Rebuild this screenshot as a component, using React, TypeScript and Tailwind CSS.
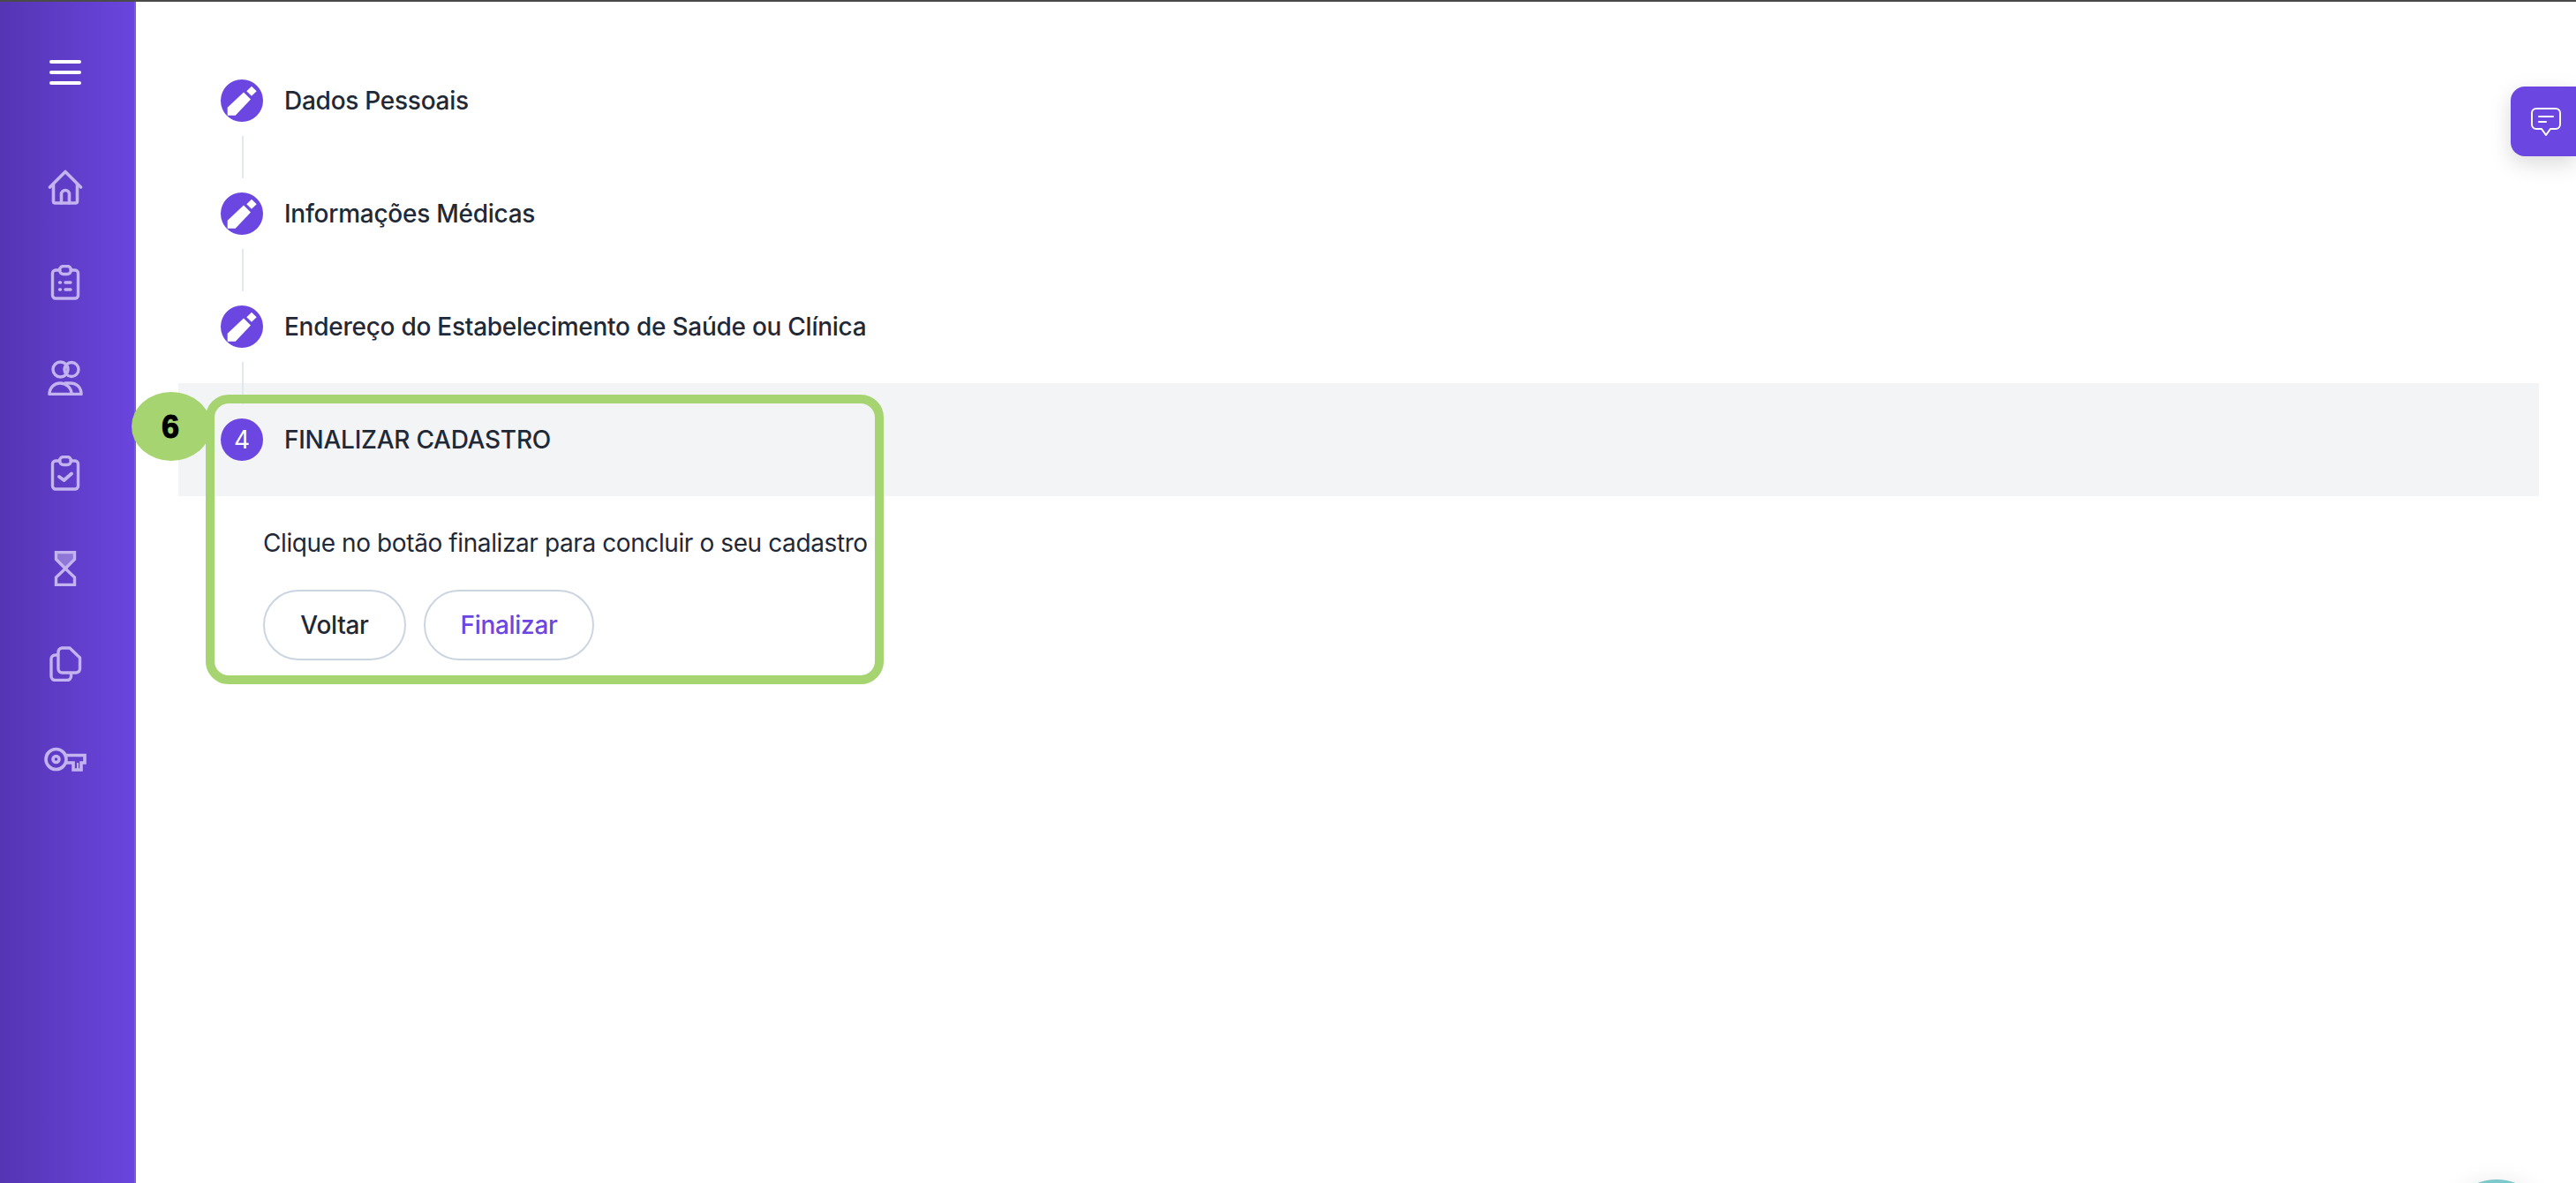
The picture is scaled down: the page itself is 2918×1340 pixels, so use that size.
const iconClass = "fill-none stroke-[#c3b3ef]";

function MenuIcon() {
  return (
    <svg width="40" height="40" viewBox="0 0 40 40" className="fill-none stroke-white">
      <path d="M4 8H36M4 20H36M4 32H36" strokeWidth="4" strokeLinecap="round" />
    </svg>
  );
}

function HomeIcon() {
  return (
    <svg width="40" height="40" viewBox="0 0 40 40" className={iconClass} strokeWidth="3.600" strokeLinejoin="round" strokeLinecap="round">
      <path d="M2.500 20L20 2.500L37.500 20" />
      <path d="M6.500 17V36a2 2 0 0 0 2 2H31.500a2 2 0 0 0 2-2V17" />
      <path d="M15.500 38V28a4.500 4.500 0 0 1 9 0V38" />
    </svg>
  );
}

function ClipboardBase() {
  return (
    <>
      <path d="M14 6H9a3.500 3.500 0 0 0-3.500 3.500V34.500A3.500 3.500 0 0 0 9 38H31a3.500 3.500 0 0 0 3.500-3.500V9.500A3.500 3.500 0 0 0 31 6H26" />
      <rect x="13.500" y="1.500" width="13" height="9" rx="4.500" />
    </>
  );
}

function ListIcon() {
  return (
    <svg width="40" height="40" viewBox="0 0 40 40" className={iconClass} strokeWidth="3.400" strokeLinecap="round">
      <ClipboardBase />
      <path d="M13.500 20h1M13.500 28h1M20 20h6M20 28h6" />
    </svg>
  );
}

function PeopleIcon() {
  return (
    <svg width="40" height="40" viewBox="0 0 40 40" className={iconClass} strokeWidth="3.400" strokeLinejoin="round">
      <circle cx="14.500" cy="10.500" r="8.500" />
      <circle cx="27" cy="10.500" r="8" />
      <path d="M2 38.500C2 31 7.500 26 14 26C21 26 27 31 27 38.500Z" />
      <path d="M19 26H26C33 26 38 31 38 38.500H27" />
    </svg>
  );
}

function CheckIcon() {
  return (
    <svg width="40" height="40" viewBox="0 0 40 40" className={iconClass} strokeWidth="3.400" strokeLinecap="round" strokeLinejoin="round">
      <ClipboardBase />
      <path d="M13 24L18.500 28L27 20.500" strokeWidth="4" />
    </svg>
  );
}

function HourglassIcon() {
  return (
    <svg width="40" height="40" viewBox="0 0 40 40" className={iconClass} strokeWidth="3.400">
      <path d="M9.500 1.500H30.500V9.500L20 20L9.500 9.500Z" className="fill-white/30" />
      <path d="M20 20L30.500 30V38.500H9.500V30Z" />
    </svg>
  );
}

function CopyIcon() {
  return (
    <svg width="40" height="40" viewBox="0 0 40 40" className={iconClass} strokeWidth="3.400" strokeLinejoin="round">
      <path d="M16 2H25L36.500 13V25.500a4.500 4.500 0 0 1-4.500 4.500H16.500a4.500 4.500 0 0 1-4.500-4.500V6.500A4.500 4.500 0 0 1 16 2Z" />
      <path d="M12 10H8.500A4.500 4.500 0 0 0 4 14.500V34a4.500 4.500 0 0 0 4.500 4.500H22a4.500 4.500 0 0 0 4.500-4.500V30" />
    </svg>
  );
}

function KeyIcon() {
  return (
    <svg width="48" height="28" viewBox="0 0 48 28" className={`shrink-0 ${iconClass}`} strokeWidth="3.600">
      <circle cx="13.500" cy="14" r="11.500" />
      <circle cx="13.500" cy="14" r="3.500" />
      <path d="M25 9.500H46V18H42V26H33V18H25" />
      <path d="M38 18V26" strokeWidth="2" />
    </svg>
  );
}

function PencilBadge() {
  return (
    <div className="h-12 w-12 shrink-0 rounded-full bg-[#6b46e0]">
      <svg width="48" height="48" viewBox="0 0 48 48" className="fill-white">
        <path d="M7.700 31.700V40.700H16.700L34 22.500L26 14.500Z" />
        <path d="M29.300 13.300L35 7.700L40.700 13.300L35 18.700Z" />
      </svg>
    </div>
  );
}

const navIcons = [HomeIcon, ListIcon, PeopleIcon, CheckIcon, HourglassIcon, CopyIcon, KeyIcon];
const doneSteps = ["Dados Pessoais", "Informações Médicas", "Endereço do Estabelecimento de Saúde ou Clínica"];

export default function App() {
  return (
    <div className="relative flex h-screen w-full overflow-hidden border-t-2 border-[#4a4a4a] bg-white font-['Inter',sans-serif] text-[#1f2937]">
      <aside className="flex w-[154px] shrink-0 flex-col items-center gap-[68px] border-r-2 border-[#7a5be3] bg-linear-to-r from-[#5535b3] to-[#6a45de] pr-1 pt-[60px]">
        <div className="mb-[22px]">
          <MenuIcon />
        </div>
        {navIcons.map((Icon, i) => (
          <div key={i} className="flex h-10 w-10 items-center justify-center">
            <Icon />
          </div>
        ))}
      </aside>

      <main className="relative flex-1 pl-12 pr-[42px] pt-[88px]">
        {doneSteps.map((label) => (
          <div key={label}>
            <div className="flex items-center gap-6 pl-12">
              <PencilBadge />
              <p className="text-[28px] font-medium leading-10 tracking-[-0.26px]">{label}</p>
            </div>
            <div className="relative z-10 my-4 ml-[72px] h-12 w-0.5 bg-[#e2e8f0]" />
          </div>
        ))}

        <div className="-mt-10 flex h-32 items-center gap-6 bg-[#f3f4f6] pl-12">
          <div className="flex h-12 w-12 shrink-0 items-center justify-center rounded-full bg-[#6b46e0] text-[28px] text-white">4</div>
          <p className="text-[28px] font-medium leading-10 tracking-[-0.26px]">FINALIZAR CADASTRO</p>
        </div>

        <div className="pl-24 pt-[33px]">
          <p className="text-[28px] leading-10 tracking-[-0.4px]">Clique no botão finalizar para concluir o seu cadastro</p>
          <div className="mt-[33px] flex gap-5">
            <button type="button" className="h-20 w-[162px] rounded-[40px] border-2 border-[#cbd5e1] text-[28px] font-medium tracking-[-0.3px]">Voltar</button>
            <button type="button" className="h-20 w-[193px] rounded-[40px] border-2 border-[#cbd5e1] text-[28px] font-medium tracking-[-0.3px] text-[#6b46e0]">Finalizar</button>
          </div>
        </div>

        <div className="absolute left-[79px] top-[445px] z-20 h-[328px] w-[768px] rounded-[26px] border-[10px] border-[#a6d470]" />
        <div className="absolute left-[-5px] top-[442px] z-30 flex h-[78px] w-[90px] items-center justify-center rounded-[50%] bg-[#a6d470] pr-0.5 pt-0.5 font-['Liberation_Sans',sans-serif] text-[36px] font-bold text-black [-webkit-text-stroke:1px_black]">6</div>
      </main>

      <button type="button" className="absolute right-0 top-[96px] flex h-[79px] w-[74px] items-center justify-center rounded-l-2xl bg-[#6b46e0] pl-1.5 shadow-[0_8px_24px_rgba(0,0,0,0.15)]">
        <svg width="36" height="34" viewBox="0 0 36 34" className="fill-none stroke-white" strokeWidth="2" strokeLinecap="round" strokeLinejoin="round">
          <path d="M7 2H29a5 5 0 0 1 5 5V20a5 5 0 0 1-5 5H23L18 32L13 25H7a5 5 0 0 1-5-5V7A5 5 0 0 1 7 2Z" />
          <path d="M10 11H26M10 17H18" />
        </svg>
      </button>
      <div className="absolute left-[2768px] top-[1334px] h-[120px] w-[120px] rounded-full bg-[#7cc8cc] shadow-[0_0_24px_rgba(0,0,0,0.08)]" />
    </div>
  );
}
